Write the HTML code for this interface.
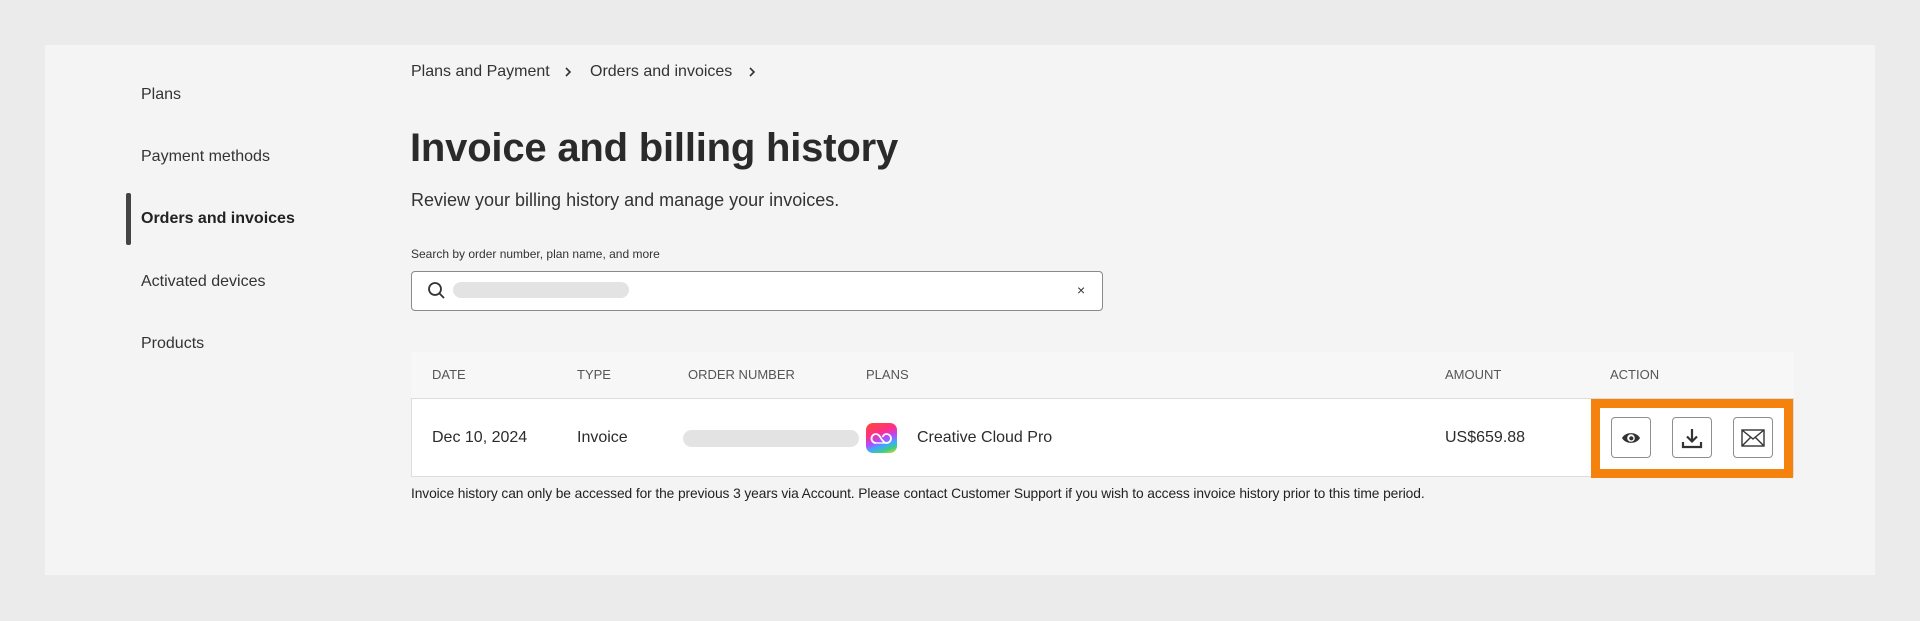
<!DOCTYPE html>
<html><head><meta charset="utf-8"><style>
*{margin:0;padding:0;box-sizing:border-box}
body{width:1920px;height:621px;background:#ebebeb;font-family:"Liberation Sans",sans-serif;color:#2c2c2c;position:relative;overflow:hidden}
.panel{position:absolute;left:45px;top:45px;width:1830px;height:530px;background:#f4f4f4}
.a{position:absolute;white-space:nowrap}
.nav{left:141px;font-size:16px;color:#333}
.btn{position:absolute;top:417px;width:40px;height:41px;border:1px solid #8e8e8e;border-radius:4px;background:#fff;display:flex;align-items:center;justify-content:center}
.th{top:367px;font-size:13px;color:#555}
</style></head><body>
<div class="panel"></div>
<div class="a nav" style="top:86px">Plans</div>
<div class="a nav" style="top:148px">Payment methods</div>
<div class="a" style="left:126px;top:193px;width:5px;height:52px;background:#444;border-radius:2px"></div>
<div class="a nav" style="top:210px;font-weight:bold;color:#222">Orders and invoices</div>
<div class="a nav" style="top:273px">Activated devices</div>
<div class="a nav" style="top:335px">Products</div>

<div class="a" style="left:411px;top:63px;font-size:16px;color:#333">Plans and Payment</div>
<svg class="a" style="left:564px;top:66px" width="8" height="12" viewBox="0 0 8 12"><path d="M2 2l4 4-4 4" fill="none" stroke="#333" stroke-width="1.6"/></svg>
<div class="a" style="left:590px;top:63px;font-size:16px;color:#333">Orders and invoices</div>
<svg class="a" style="left:748px;top:66px" width="8" height="12" viewBox="0 0 8 12"><path d="M2 2l4 4-4 4" fill="none" stroke="#333" stroke-width="1.6"/></svg>

<div class="a" style="left:410px;top:126px;font-size:40px;font-weight:bold;color:#2a2a2a;letter-spacing:-0.2px">Invoice and billing history</div>
<div class="a" style="left:411px;top:190px;font-size:18px;color:#333">Review your billing history and manage your invoices.</div>
<div class="a" style="left:411px;top:247px;font-size:12px;color:#333">Search by order number, plan name, and more</div>
<div class="a" style="left:411px;top:271px;width:692px;height:40px;border:1.5px solid #8a8a8a;border-radius:4px;background:#fff"></div>
<svg class="a" style="left:427px;top:281px" width="20" height="20" viewBox="0 0 20 20"><circle cx="8" cy="8" r="6" fill="none" stroke="#333" stroke-width="1.8"/><path d="M12.3 12.3L17 17" stroke="#333" stroke-width="1.8"/></svg>
<div class="a" style="left:453px;top:282px;width:176px;height:16px;border-radius:8px;background:#e3e3e3"></div>
<div class="a" style="left:1077px;top:282px;font-size:14px;color:#333">×</div>

<div class="a" style="left:411px;top:352px;width:1383px;height:46px;background:#f7f7f7"></div>
<div class="a th" style="left:432px">DATE</div>
<div class="a th" style="left:577px">TYPE</div>
<div class="a th" style="left:688px">ORDER NUMBER</div>
<div class="a th" style="left:866px">PLANS</div>
<div class="a th" style="left:1445px">AMOUNT</div>
<div class="a th" style="left:1610px">ACTION</div>

<div class="a" style="left:411px;top:398px;width:1383px;height:79px;background:#fff;border:1px solid #ddd"></div>
<div class="a" style="left:432px;top:429px;font-size:16px">Dec 10, 2024</div>
<div class="a" style="left:577px;top:429px;font-size:16px">Invoice</div>
<div class="a" style="left:683px;top:430px;width:176px;height:17px;border-radius:9px;background:#e3e3e3"></div>
<div class="a" style="left:866px;top:423px;width:31px;height:30px;border-radius:7px;background:linear-gradient(160deg,#ff4b2b 0%,#ff2e8a 35%,#b44bff 55%,#3fa9ff 70%,#3fd07a 85%,#ffd42a 100%)"></div>
<svg class="a" style="left:870px;top:428px" width="23" height="20" viewBox="0 0 23 20"><path d="M6 15a4.5 4.5 0 0 1 0-9c3 0 4 3 5.5 5s2.5 4 5 4a4.5 4.5 0 0 0 0-9c-2.5 0-3.5 2-4 3" fill="none" stroke="#fff" stroke-width="1.8"/><path d="M6 15h11" stroke="#fff" stroke-width="1.3"/></svg>
<div class="a" style="left:917px;top:429px;font-size:16px">Creative Cloud Pro</div>
<div class="a" style="left:1445px;top:429px;font-size:16px">US$659.88</div>

<div class="a" style="left:1591px;top:399px;width:202px;height:79px;border:9px solid #f5820d"></div>
<div class="btn" style="left:1611px"><svg width="20" height="14" viewBox="0 0 20 14"><path d="M1 7C4.5 0.5 15.5 0.5 19 7C15.5 13.5 4.5 13.5 1 7Z" fill="#333"/><circle cx="10" cy="7" r="3.8" fill="#fff"/><circle cx="10.3" cy="7.3" r="2.1" fill="#333"/></svg></div>
<div class="btn" style="left:1672px"><svg width="22" height="22" viewBox="0 0 22 22"><path d="M11 2v12M6 9.5l5 5 5-5" fill="none" stroke="#333" stroke-width="2.2"/><path d="M2 15v5h18v-5" fill="none" stroke="#333" stroke-width="2.2"/></svg></div>
<div class="btn" style="left:1733px"><svg width="24" height="18" viewBox="0 0 24 18"><rect x="1" y="1" width="22" height="16" fill="none" stroke="#333" stroke-width="1.4"/><path d="M1 1l11 9 11-9M1 17l8.5-8.5M23 17l-8.5-8.5" fill="none" stroke="#333" stroke-width="1.4"/></svg></div>

<div class="a" style="left:411px;top:486px;font-size:13.8px;color:#222;letter-spacing:-0.1px">Invoice history can only be accessed for the previous 3 years via Account. Please contact Customer Support if you wish to access invoice history prior to this time period.</div>
</body></html>
